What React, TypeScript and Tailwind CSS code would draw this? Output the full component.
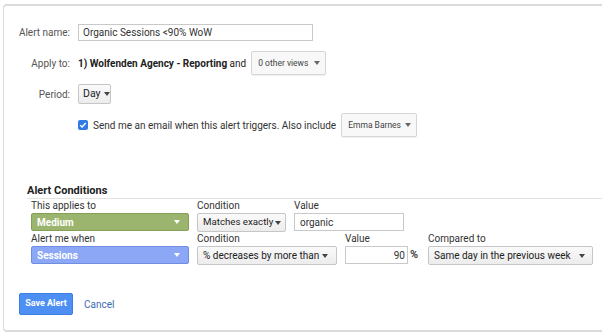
import React from "react";

function Caret({ className = "" }: { className?: string }) {
  return (
    <svg width="6" height="4" viewBox="0 0 6 4" className={className}>
      <path d="M0 0h6L3 4z" fill="currentColor" />
    </svg>
  );
}

function FormRow({ label, className = "", children }: { label?: string; className?: string; children: React.ReactNode }) {
  return (
    <div className={`flex items-center gap-[8px] ${className}`}>
      <div className="w-[66px] shrink-0 text-right text-[10px] text-[#555]">{label}</div>
      {children}
    </div>
  );
}

function GrayDrop({ text, className = "" }: { text: string; className?: string }) {
  return (
    <div
      className={`flex items-center justify-between rounded-[2px] border border-[#d6d6d6] bg-[#f8f8f8] pl-[6px] pr-[5px] text-[8.5px] text-[#444] shadow-[0_1px_1px_rgba(0,0,0,0.06)] ${className}`}
    >
      <span>{text}</span>
      <Caret className="text-[#666]" />
    </div>
  );
}

function ColLabel({ children }: { children: React.ReactNode }) {
  return <div className="h-[14px] text-[10px] leading-[14px] text-[#333]">{children}</div>;
}

export default function App() {
  return (
    <div className="h-[336px] w-[602px] overflow-hidden bg-white font-['Roboto',sans-serif] text-[#333]">
      <div className="ml-[3px] mt-[4px] flex h-[328px] w-[640px] flex-col rounded-l-[4px] border-b-2 border-l border-t-2 border-[#dadada] pt-[18px]">
        <FormRow label="Alert name:" className="h-[17px]">
          <div className="flex h-[17px] w-[235px] items-center border border-[#c9c9c9] px-[4px] text-[10px] text-[#333]">
            Organic Sessions &lt;90% WoW
          </div>
        </FormRow>

        <FormRow label="Apply to:" className="mt-[10px] h-[24px]">
          <div className="flex items-center gap-[5px] text-[10px] text-[#222]">
            <span>
              <b className="font-bold">1) Wolfenden Agency - Reporting</b> and
            </span>
            <GrayDrop text="0 other views" className="h-[24px] w-[75px]" />
          </div>
        </FormRow>

        <FormRow label="Period:" className="mt-[9px] h-[20px]">
          <div className="flex h-[20px] w-[33px] items-center gap-[3px] rounded-[2px] border border-[#c6c6c6] bg-gradient-to-b from-[#fafafa] to-[#ececec] pl-[4px] text-[10.5px] text-[#222]">
            <span>Day</span>
            <Caret className="text-[#444]" />
          </div>
        </FormRow>

        <FormRow className="mt-[9px] h-[24px]">
          <div className="flex items-center gap-[5px] text-[10px] text-[#333]">
            <span className="flex h-[10px] w-[10px] items-center justify-center rounded-[2px] bg-[#2f7ae5]">
              <svg width="8" height="8" viewBox="0 0 8 8">
                <path d="M1.3 4.2l1.8 1.8 3.6-4" stroke="white" strokeWidth="1.4" fill="none" />
              </svg>
            </span>
            <span>Send me an email when this alert triggers. Also include</span>
            <GrayDrop text="Emma Barnes" className="h-[24px] w-[76px]" />
          </div>
        </FormRow>

        <div className="ml-[23px] mt-[46px]">
          <div className="border-b border-[#e3e3e3] text-[11px] font-bold leading-[15px] text-[#222]">Alert Conditions</div>

          <div className="flex gap-[8px] pl-[4px]">
            <div className="w-[158px]">
              <ColLabel>This applies to</ColLabel>
              <div className="flex h-[18px] items-center justify-between rounded-[2px] border border-[#84a058] bg-[#9bb56e] pl-[5px] pr-[8px] text-[10px] font-bold text-white">
                <span>Medium</span>
                <Caret />
              </div>
            </div>
            <div className="w-[89px]">
              <ColLabel>Condition</ColLabel>
              <div className="flex h-[19px] items-center gap-[2px] rounded-[2px] border border-[#c6c6c6] bg-gradient-to-b from-[#fafafa] to-[#ececec] pl-[5px] text-[9.7px] text-[#222]">
                <span>Matches exactly</span>
                <Caret className="text-[#444]" />
              </div>
            </div>
            <div className="w-[110px]">
              <ColLabel>Value</ColLabel>
              <div className="flex h-[18px] items-center border border-[#c9c9c9] px-[5px] text-[10px] text-[#333]">organic</div>
            </div>
          </div>

          <div className="flex gap-[8px] pl-[4px]">
            <div className="w-[158px]">
              <ColLabel>Alert me when</ColLabel>
              <div className="flex h-[18px] items-center justify-between rounded-[2px] border border-[#6f8ee2] bg-[#8ca7f5] pl-[5px] pr-[8px] text-[10px] font-bold text-white">
                <span>Sessions</span>
                <Caret />
              </div>
            </div>
            <div className="w-[140px]">
              <ColLabel>Condition</ColLabel>
              <div className="flex h-[19px] items-center justify-between rounded-[2px] border border-[#c6c6c6] bg-gradient-to-b from-[#fafafa] to-[#ececec] pl-[5px] pr-[8px] text-[10px] text-[#222]">
                <span>% decreases by more than</span>
                <Caret className="text-[#444]" />
              </div>
            </div>
            <div className="w-[75px]">
              <ColLabel>Value</ColLabel>
              <div className="flex items-center gap-[2px]">
                <div className="flex h-[18px] w-[63px] items-center justify-end border border-[#c9c9c9] px-[2px] text-[10px] text-[#333]">90</div>
                <span className="text-[11px] font-bold text-[#444]">%</span>
              </div>
            </div>
            <div className="w-[165px]">
              <ColLabel>Compared to</ColLabel>
              <div className="flex h-[19px] items-center justify-between rounded-[2px] border border-[#c6c6c6] bg-gradient-to-b from-[#fafafa] to-[#ececec] pl-[5px] pr-[7px] text-[10px] text-[#222]">
                <span>Same day in the previous week</span>
                <Caret className="text-[#444]" />
              </div>
            </div>
          </div>
        </div>

        <div className="ml-[15px] mt-[28px] flex items-center gap-[11px]">
          <button className="h-[22px] w-[54px] rounded-[2px] border border-[#3b7fe6] bg-[#4d8ff2] text-[9px] font-bold text-white">
            Save Alert
          </button>
          <span className="text-[10px] text-[#3c6db2]">Cancel</span>
        </div>
      </div>
    </div>
  );
}
